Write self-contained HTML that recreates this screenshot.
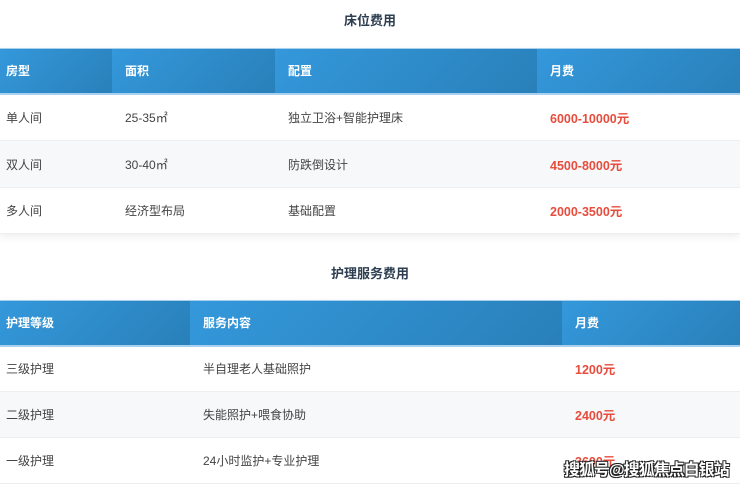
<!DOCTYPE html>
<html><head><meta charset="utf-8"><style>
*{margin:0;padding:0;box-sizing:border-box}
html,body{width:740px;height:483px;overflow:hidden;background:#fff;font-family:"Liberation Sans","Noto Sans CJK SC",sans-serif;color:#444}
.title{position:absolute;left:0;width:740px;text-align:center;font-size:13px;font-weight:bold;color:#2c3e50}
table{position:absolute;left:0;width:740px;border-collapse:collapse;table-layout:fixed;box-shadow:0 3px 8px rgba(0,0,0,0.07)}
th{background:linear-gradient(135deg,#3498db,#2980b9);color:#fff;font-size:12px;font-weight:bold;text-align:left;padding-left:6px;height:45px;border-top:1px solid #a9d0ee;border-bottom:2px solid #a9d0ee}
td{font-size:12px;padding-left:6px;color:#444;border-bottom:1px solid #eceef1}
tr.e td{background:#f7f8fa}
td.p{color:#e74c3c;font-weight:bold;font-size:12.5px}
.wm{position:absolute;left:564px;top:456px;font-size:16px;font-weight:bold;color:#fff;white-space:nowrap;letter-spacing:-1px;text-shadow:-1px -1px 0 #222,1px -1px 0 #222,-1px 1px 0 #222,1px 1px 0 #222}
</style></head><body>
<div class="title" style="top:10px">床位费用</div>
<table style="top:48px">
<colgroup><col style="width:112px"><col style="width:163px"><col style="width:262px"><col style="width:203px"></colgroup>
<tr><th>房型</th><th style="padding-left:13px">面积</th><th style="padding-left:13px">配置</th><th style="padding-left:13px">月费</th></tr>
<tr style="height:47px"><td>单人间</td><td style="padding-left:13px">25-35㎡</td><td style="padding-left:13px">独立卫浴+智能护理床</td><td class="p" style="padding-left:13px">6000-10000元</td></tr>
<tr class="e" style="height:47px"><td>双人间</td><td style="padding-left:13px">30-40㎡</td><td style="padding-left:13px">防跌倒设计</td><td class="p" style="padding-left:13px">4500-8000元</td></tr>
<tr style="height:46px"><td>多人间</td><td style="padding-left:13px">经济型布局</td><td style="padding-left:13px">基础配置</td><td class="p" style="padding-left:13px">2000-3500元</td></tr>
</table>
<div class="title" style="top:263px">护理服务费用</div>
<table style="top:300px">
<colgroup><col style="width:190px"><col style="width:372px"><col style="width:178px"></colgroup>
<tr><th>护理等级</th><th style="padding-left:13px">服务内容</th><th style="padding-left:13px">月费</th></tr>
<tr style="height:46px"><td>三级护理</td><td style="padding-left:13px">半自理老人基础照护</td><td class="p" style="padding-left:13px">1200元</td></tr>
<tr class="e" style="height:46px"><td>二级护理</td><td style="padding-left:13px">失能照护+喂食协助</td><td class="p" style="padding-left:13px">2400元</td></tr>
<tr style="height:46px"><td>一级护理</td><td style="padding-left:13px">24小时监护+专业护理</td><td class="p" style="padding-left:13px">3600元</td></tr>
</table>
<div class="wm">搜狐号@搜狐焦点白银站</div>
</body></html>
